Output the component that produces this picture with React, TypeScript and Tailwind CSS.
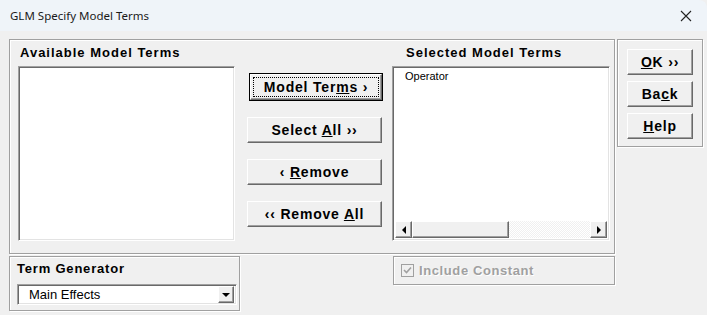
import React from 'react';

const groove = 'border border-[#a0a0a0] shadow-[inset_1px_1px_0_#ffffff,1px_1px_0_#ffffff]';
const sunken =
  'border border-t-[#a0a0a0] border-l-[#a0a0a0] border-b-white border-r-white shadow-[inset_1px_1px_0_#696969,inset_-1px_-1px_0_#e3e3e3]';
const raised =
  'border border-t-white border-l-white border-b-[#696969] border-r-[#696969] shadow-[inset_-1px_-1px_0_#a0a0a0]';

const font = { fontFamily: '"Liberation Sans", Arial, sans-serif' };

const Btn: React.FC<{ className?: string; focused?: boolean; children: React.ReactNode }> = ({
  className = '',
  focused,
  children,
}) =>
  focused ? (
    <div className={`border border-black ${className}`}>
      <div className={`h-full w-full ${raised} bg-[#f0f0f0] p-[2px]`}>
        <div className="flex h-full w-full items-center justify-center border border-dotted border-black text-[14px] font-bold tracking-[0.8px] text-black">
          {children}
        </div>
      </div>
    </div>
  ) : (
    <div
      className={`flex items-center justify-center ${raised} bg-[#f0f0f0] text-[14px] font-bold tracking-[0.8px] text-black ${className}`}
    >
      {children}
    </div>
  );

const Arrow: React.FC<{ dir: 'left' | 'right' | 'down' }> = ({ dir }) => (
  <svg width="8" height="8" viewBox="0 0 8 8">
    {dir === 'left' && <polygon points="6,0 6,8 2,4" fill="#000" />}
    {dir === 'right' && <polygon points="2,0 2,8 6,4" fill="#000" />}
    {dir === 'down' && <polygon points="0,2 8,2 4,6" fill="#000" />}
  </svg>
);

export default function App() {
  return (
    <div className="h-[315px] w-[707px] overflow-hidden bg-[#f0f0f0]" style={font}>
      {/* Title bar */}
      <div className="flex h-[31px] items-center justify-between rounded-tr-[8px] bg-[#eff4f9] pl-[10px] pr-[10px]">
        <span className="text-[11.5px] text-[#1a1a1a]" style={{ fontFamily: '"Noto Sans", "Open Sans", sans-serif' }}>
          GLM Specify Model Terms
        </span>
        <svg width="12" height="12" viewBox="0 0 12 12" className="mr-[5px]">
          <path d="M1 1 L11 11 M11 1 L1 11" stroke="#222" strokeWidth="1.1" />
        </svg>
      </div>

      {/* Body */}
      <div className="flex gap-[2px] pl-[9px] pt-[8px]">
        <div className="flex flex-col">
          {/* Main frame */}
          <div className={`flex h-[215px] w-[606px] ${groove}`}>
            <div className="flex flex-col pl-[8px] pt-[4px]">
              <div className="h-[18px] pl-[2px] text-[13px] font-bold leading-[18px] tracking-[1px] text-black">
                Available Model Terms
              </div>
              <div className={`mt-[4px] h-[175px] w-[217px] bg-white ${sunken}`} />
            </div>
            <div className="flex flex-col gap-[16px] pl-[12px] pt-[33px]">
              <Btn focused className="ml-[2px] h-[28px] w-[134px]">
                <span>
                  Model Ter<u>m</u>s ›
                </span>
              </Btn>
              <Btn className="h-[26px] w-[135px]">
                <span>
                  Select <u>A</u>ll ››
                </span>
              </Btn>
              <Btn className="h-[26px] w-[135px]">
                <span>
                  ‹ <u>R</u>emove
                </span>
              </Btn>
              <Btn className="h-[26px] w-[135px]">
                <span>
                  ‹‹ Remove <u>A</u>ll
                </span>
              </Btn>
            </div>
            <div className="flex flex-col pl-[9px] pt-[4px]">
              <div className="h-[18px] pl-[14px] text-[13px] font-bold leading-[18px] tracking-[1px] text-black">
                Selected Model Terms
              </div>
              <div className={`mt-[4px] flex h-[175px] w-[218px] flex-col bg-white p-[2px] ${sunken}`}>
                <div className="flex-1 pl-[10px] pt-[1px] text-[11px] leading-[12px] text-black">Operator</div>
                <div className="flex h-[17px] bg-[repeating-conic-gradient(#f0f0f0_0%_25%,#ffffff_0%_50%)] bg-[length:2px_2px]">
                  <div className={`flex h-[17px] w-[17px] items-center justify-center bg-[#f0f0f0] ${raised}`}>
                    <Arrow dir="left" />
                  </div>
                  <div className={`h-[17px] w-[97px] bg-[#f0f0f0] ${raised}`} />
                  <div className="flex-1" />
                  <div className={`flex h-[17px] w-[17px] items-center justify-center bg-[#f0f0f0] ${raised}`}>
                    <Arrow dir="right" />
                  </div>
                </div>
              </div>
            </div>
          </div>

          {/* Bottom row */}
          <div className="flex pt-[2px]">
            <div className={`h-[55px] w-[231px] ${groove} pl-[7px] pt-[3px]`}>
              <div className="h-[18px] text-[13px] font-bold leading-[18px] tracking-[0.8px] text-black">
                Term Generator
              </div>
              <div className={`mt-[6px] flex h-[21px] w-[220px] items-center bg-white p-[2px] ${sunken}`}>
                <span className="flex-1 pl-[9px] text-[13px] text-black">Main Effects</span>
                <div className={`flex h-[17px] w-[16px] items-center justify-center bg-[#f0f0f0] ${raised}`}>
                  <Arrow dir="down" />
                </div>
              </div>
            </div>
            <div className="pl-[153px]">
              <div className={`flex h-[29px] w-[222px] items-center gap-[5px] pl-[7px] ${groove}`}>
                <div className="flex h-[13px] w-[13px] items-center justify-center border border-[#a0a0a0] bg-[#f0f0f0]">
                  <svg width="9" height="9" viewBox="0 0 9 9">
                    <path d="M1 4 L3.5 6.5 L8 1.5" stroke="#a0a0a0" strokeWidth="1.6" fill="none" />
                  </svg>
                </div>
                <span className="text-[13px] font-bold tracking-[0.6px] text-[#a0a0a0] [text-shadow:1px_1px_0_#ffffff]">
                  Include Constant
                </span>
              </div>
            </div>
          </div>
        </div>

        {/* Right frame */}
        <div className={`flex h-[108px] w-[86px] flex-col items-center gap-[6px] pt-[9px] ${groove}`}>
          <Btn className="h-[26px] w-[66px] border-l-black border-t-black">
            <span>
              <u>O</u>K ››
            </span>
          </Btn>
          <Btn className="h-[26px] w-[66px]">
            <span>
              Ba<u>c</u>k
            </span>
          </Btn>
          <Btn className="h-[26px] w-[66px]">
            <span>
              <u>H</u>elp
            </span>
          </Btn>
        </div>
      </div>
    </div>
  );
}
